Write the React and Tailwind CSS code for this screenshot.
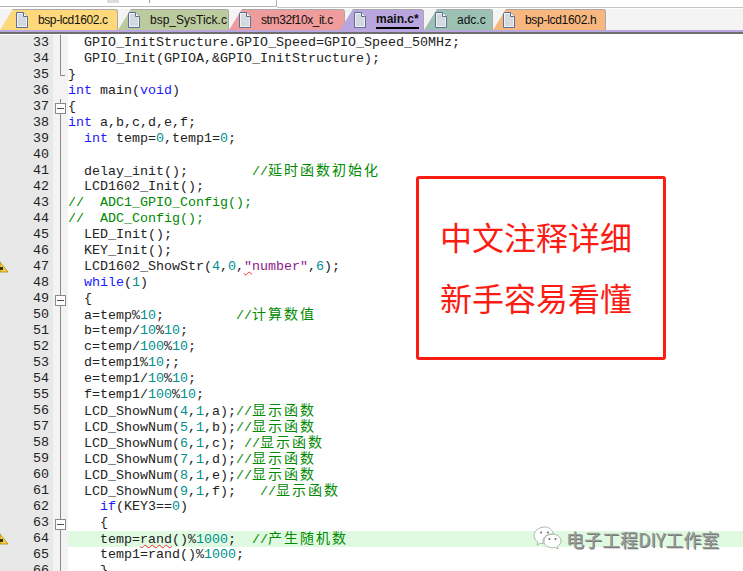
const firstLine = 33;

// k = keyword, n = number, s = string, c = comment, z = chinese comment, w = squiggle, t = plain
const lines = [
  [["t", "  GPIO_InitStructure.GPIO_Speed=GPIO_Speed_50MHz;"]],
  [["t", "  GPIO_Init(GPIOA,&GPIO_InitStructure);"]],
  [["t", "}"]],
  [["k", "int"], ["t", " main("], ["k", "void"], ["t", ")"]],
  [["t", "{"]],
  [["k", "int"], ["t", " a,b,c,d,e,f;"]],
  [["t", "  "], ["k", "int"], ["t", " temp="], ["n", "0"], ["t", ",temp1="], ["n", "0"], ["t", ";"]],
  [],
  [["t", "  delay_init();        "], ["c", "//"], ["z", "延时函数初始化"]],
  [["t", "  LCD1602_Init();"]],
  [["c", "//  ADC1_GPIO_Config();"]],
  [["c", "//  ADC_Config();"]],
  [["t", "  LED_Init();"]],
  [["t", "  KEY_Init();"]],
  [["t", "  LCD1602_ShowStr("], ["n", "4"], ["t", ","], ["n", "0"], ["t", ","], ["sw", "\""], ["s", "number\""], ["t", ","], ["n", "6"], ["t", ");"]],
  [["t", "  "], ["k", "while"], ["t", "("], ["n", "1"], ["t", ")"]],
  [["t", "  {"]],
  [["t", "  a=temp%"], ["n", "10"], ["t", ";         "], ["c", "//"], ["z", "计算数值"]],
  [["t", "  b=temp/"], ["n", "10"], ["t", "%"], ["n", "10"], ["t", ";"]],
  [["t", "  c=temp/"], ["n", "100"], ["t", "%"], ["n", "10"], ["t", ";"]],
  [["t", "  d=temp1%"], ["n", "10"], ["t", ";;"]],
  [["t", "  e=temp1/"], ["n", "10"], ["t", "%"], ["n", "10"], ["t", ";"]],
  [["t", "  f=temp1/"], ["n", "100"], ["t", "%"], ["n", "10"], ["t", ";"]],
  [["t", "  LCD_ShowNum("], ["n", "4"], ["t", ","], ["n", "1"], ["t", ",a);"], ["c", "//"], ["z", "显示函数"]],
  [["t", "  LCD_ShowNum("], ["n", "5"], ["t", ","], ["n", "1"], ["t", ",b);"], ["c", "//"], ["z", "显示函数"]],
  [["t", "  LCD_ShowNum("], ["n", "6"], ["t", ","], ["n", "1"], ["t", ",c); "], ["c", "//"], ["z", "显示函数"]],
  [["t", "  LCD_ShowNum("], ["n", "7"], ["t", ","], ["n", "1"], ["t", ",d);"], ["c", "//"], ["z", "显示函数"]],
  [["t", "  LCD_ShowNum("], ["n", "8"], ["t", ","], ["n", "1"], ["t", ",e);"], ["c", "//"], ["z", "显示函数"]],
  [["t", "  LCD_ShowNum("], ["n", "9"], ["t", ","], ["n", "1"], ["t", ",f);   "], ["c", "//"], ["z", "显示函数"]],
  [["t", "    "], ["k", "if"], ["t", "(KEY3=="], ["n", "0"], ["t", ")"]],
  [["t", "    {"]],
  [["t", "    temp="], ["w", "rand"], ["t", "()%"], ["n", "1000"], ["t", ";  "], ["c", "//"], ["z", "产生随机数"]],
  [["t", "    temp1=rand()%"], ["n", "1000"], ["t", ";"]],
  [["t", "    }"]],
];

const foldBoxes = [37, 49, 63];
const warnings = [47, 64];

const segClass = {
  t: "text-[#222222]",
  k: "text-[#1a1aff]",
  n: "text-[#008f8f]",
  s: "text-[#8a1a8a]",
  sw: "text-[#8a1a8a] underline decoration-wavy decoration-red-500 decoration-1",
  w: "text-[#222222] underline decoration-wavy decoration-red-500 decoration-1",
  c: "text-[#008a00]",
  z: "text-[#008a00] text-[14px] tracking-[2px] leading-[16px]",
};

const tabs = [
  { name: "bsp-lcd1602.c", cls: "bg-[#fdd97c] w-[118px] pl-[15px] tracking-[-0.4px]" },
  { name: "bsp_SysTick.c", cls: "bg-[#bccb9e] w-[111px] pl-[9px]" },
  { name: "stm32f10x_it.c", cls: "bg-[#ef9c9c] w-[116px] pl-[9px] tracking-[-0.4px]" },
  { name: "main.c*", cls: "bg-[#b9a6de] w-[84px] pl-[13px] -ml-[5px]", active: true },
  { name: "adc.c", cls: "bg-[#9cc0b2] w-[69px] pl-[10px]" },
  { name: "bsp-lcd1602.h", cls: "bg-[#f7b77f] w-[113px] pl-[9px] tracking-[-0.3px]" },
];

function FileIcon() {
  return (
    <svg width="13" height="16" viewBox="0 0 13 16" className="shrink-0">
      <path d="M1.500.500h7l4 4v11h-11z" fill="#eef1f6" stroke="#5b6f94" />
      <path d="M3 2h5v3h3v9H3z" fill="#d5d8de" />
      <path d="M8.500.500v4h4" fill="#fff" stroke="#5b6f94" />
    </svg>
  );
}

function WarnIcon() {
  return (
    <svg width="9" height="12" viewBox="0 0 9 12" className="absolute left-0 top-[2px] z-10">
      <path d="M0 1 8 11H0z" fill="#f5d340" stroke="#b08a10" strokeWidth="0.8" />
      <rect x="0" y="6" width="3" height="3" fill="#3a3000" />
    </svg>
  );
}

function WeChatIcon() {
  return (
    <svg width="29" height="25" viewBox="0 0 29 25" fill="#fff" stroke="#9aa39c" strokeWidth="0.8">
      <path d="M12 1C6 1 1 4.800 1 9.500c0 2.600 1.500 4.800 3.800 6.400L4 19l3.400-1.700c1 .3 2 .4 3 .4-.3-.8-.5-1.700-.5-2.500C9.900 11 14 8 19 8c.6 0 1 0 1.500.1C19.600 4 16 1 12 1z" />
      <path d="M28 15c0-3.900-3.900-6.800-8.500-6.800S11 11.100 11 15s3.900 6.800 8.500 6.800c.9 0 1.800-.1 2.600-.4L25 23l-.7-2.600C26.600 19 28 17.100 28 15z" />
      <circle cx="8" cy="6.500" r="1" fill="#666" stroke="none" />
      <circle cx="15" cy="6.500" r="1" fill="#666" stroke="none" />
      <circle cx="16.500" cy="13" r="1" fill="#666" stroke="none" />
      <circle cx="22.500" cy="13" r="1" fill="#666" stroke="none" />
    </svg>
  );
}

function Tab({ tab }) {
  return (
    <div
      className={`${tab.cls} h-[21px] shrink-0 flex items-center gap-[10px] rounded-tr-[3px] border-t border-r border-[#a9a9a9] [clip-path:polygon(13px_0,100%_0,100%_100%,0_100%)]`}
    >
      <FileIcon />
      <span
        className={`whitespace-nowrap text-[12px] leading-[15px] text-[#111111] [font-family:'Liberation_Sans',sans-serif] ${
          tab.active ? "font-bold border-b-2 border-black" : ""
        }`}
      >
        {tab.name}
      </span>
    </div>
  );
}

// gutter fold marker for one line
function FoldMark({ no }) {
  if (no === 36) return null;
  if (no === 35) {
    return (
      <div className="absolute left-[7px] top-0 h-[9px] w-[5px] border-l border-b border-[#8a8a8a]" />
    );
  }
  return (
    <>
      <div className="absolute left-[7px] top-0 bottom-0 w-px bg-[#8a8a8a]" />
      {foldBoxes.includes(no) && (
        <div className="absolute left-[2px] top-[4px] w-[11px] h-[11px] border border-[#8a8a8a] bg-white flex items-center justify-center">
          <div className="w-[7px] h-px bg-[#555555]" />
        </div>
      )}
    </>
  );
}

export default function App() {
  return (
    <div className="relative w-[743px] h-[571px] overflow-hidden bg-white">
      {/* toolbar remains */}
      <div className="h-[9px] flex">
        <div className="w-[277px] h-[7px] border-b border-r border-[#b5b5b5] flex">
          <div className="ml-[107px] w-[12px] h-[3px] bg-[#dcdcdc]" />
          <div className="ml-[30px] w-px h-[3px] bg-[#9a9a9a]" />
        </div>
        <div className="flex-1 h-[8px] border-b border-[#c4c4c4]" />
      </div>

      {/* tabs */}
      <div className="h-[21px] flex bg-[#f4f4f4]">
        {tabs.map((tab) => (
          <Tab key={tab.name} tab={tab} />
        ))}
      </div>
      <div className="h-[2px] bg-[#b9a6de]" />
      <div className="h-[2px] bg-[#6e6e6e]" />

      {/* editor */}
      <div className="pt-[1px] [font-family:'Liberation_Mono','Noto_Sans_CJK_SC',monospace] text-[13.33px] leading-[16px]">
        {lines.map((segs, i) => {
          const no = firstLine + i;
          return (
            <div key={no} className="relative flex h-[16px]">
              {warnings.includes(no) && <WarnIcon />}
              <div className="w-[53px] shrink-0 bg-[#e8e8e8] pr-[4px] text-right text-[#222222]">{no}</div>
              <div className="relative w-[15px] shrink-0 bg-[#f3f3f3]">
                <FoldMark no={no} />
              </div>
              <div className={`flex-1 whitespace-pre ${no === 64 ? "bg-[#e0fae2]" : ""}`}>
                {segs.map((seg, j) => (
                  <span key={j} className={segClass[seg[0]]}>
                    {seg[1]}
                  </span>
                ))}
              </div>
            </div>
          );
        })}
      </div>

      {/* annotation box */}
      <div className="absolute left-[416px] top-[176px] w-[250px] h-[184px] border-[3px] border-[#fb1d14] rounded-[3px] bg-white flex flex-col pl-[21px] pt-[36px] gap-[18px] text-[32px] leading-[43px] text-[#fb1d14] [font-family:'Noto_Sans_CJK_SC',sans-serif]">
        <div>中文注释详细</div>
        <div>新手容易看懂</div>
      </div>

      {/* watermark */}
      <div className="absolute left-[533px] top-[526px] flex items-center gap-[4px]">
        <WeChatIcon />
        <span className="text-[18px] leading-[24px] text-[#9a9a9a] [font-family:'Noto_Sans_CJK_SC',sans-serif] [text-shadow:1px_1px_0_#777]">
          电子工程DIY工作室
        </span>
      </div>
    </div>
  );
}
